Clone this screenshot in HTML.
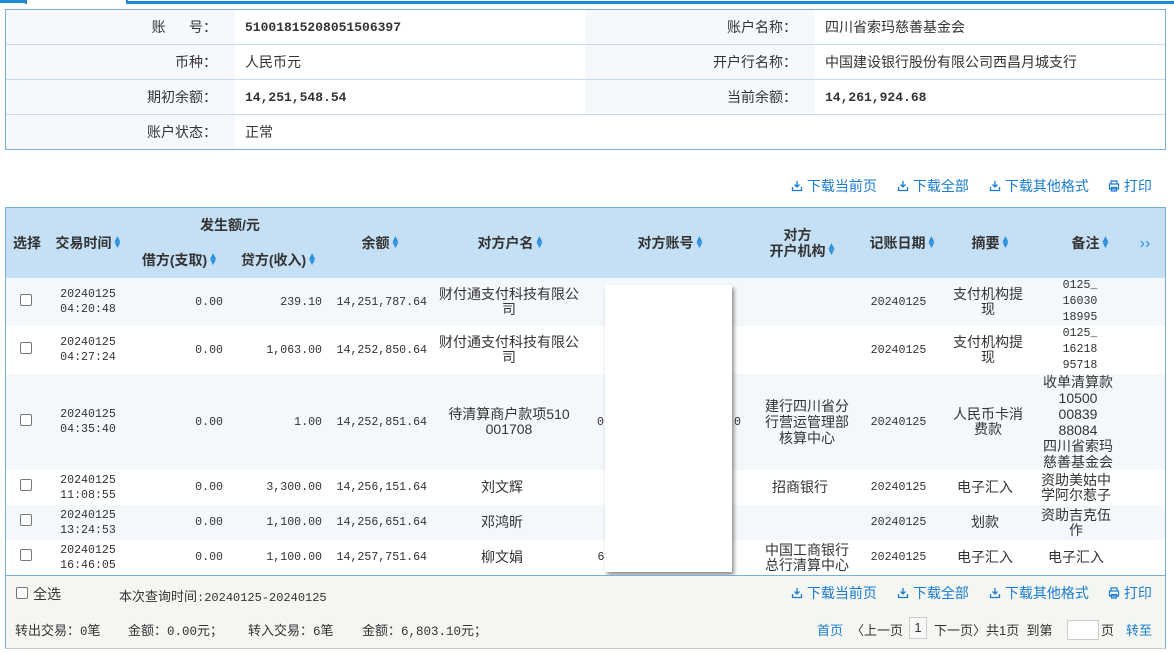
<!DOCTYPE html>
<html><head><meta charset="utf-8">
<style>
*{margin:0;padding:0;box-sizing:border-box}
body{width:1174px;height:653px;background:#fff;position:relative;overflow:hidden;font-family:"Liberation Sans","Noto Sans CJK SC",sans-serif;font-size:14px;color:#333}
.a{position:absolute}
.c{position:absolute;display:flex;align-items:center;justify-content:center;text-align:center;line-height:15px}
.r{justify-content:flex-end;text-align:right}
.m{font-family:"Liberation Mono","Noto Sans CJK SC",monospace;font-size:11.6px}
.lbl{position:absolute;background:#f5f9fd;display:flex;align-items:center;justify-content:flex-end;padding-right:18px}
.val{position:absolute;display:flex;align-items:center;padding-left:10px}
.hd{font-weight:bold;color:#333;font-size:14px}
.ar{color:#2a8fdc;font-size:10px;display:inline-block;width:8px;line-height:6px;vertical-align:middle;margin-left:1px}
.lnk{position:absolute;color:#1a7bd0;font-size:14px;display:flex;align-items:center}
.cb{position:absolute;width:12px;height:12px;border:1px solid #777;border-radius:2px;background:#fff}
.ft{position:absolute;top:620px;font-size:13px}
.ft .m{font-size:12.5px}
</style></head><body>
<div class="a" style="left:0;top:0;width:26px;height:3px;background:#1e8ad6"></div>
<div class="a" style="left:25px;top:0;width:2px;height:4px;background:#1e8ad6"></div>
<div class="a" style="left:126px;top:0;width:2px;height:4px;background:#1e8ad6"></div>
<div class="a" style="left:127px;top:1px;width:1047px;height:3px;background:#1e8ad6"></div>

<div class="a" style="left:5px;top:9px;width:1161px;height:141px;border:1px solid #7aaedc"></div>
<div class="lbl" style="left:6px;top:10px;width:229px;height:34px">账&nbsp;&nbsp;&nbsp;&nbsp;&nbsp;&nbsp;号：</div>
<div class="val m" style="left:235px;top:10px;height:34px;font-weight:bold;font-size:13px">51001815208051506397</div>
<div class="lbl" style="left:585px;top:10px;width:230px;height:34px">账户名称：</div>
<div class="val" style="left:815px;top:10px;height:34px">四川省索玛慈善基金会</div>
<div class="a" style="left:6px;top:44px;width:1159px;height:1px;background:#c8daed"></div>
<div class="lbl" style="left:6px;top:45px;width:229px;height:34px">币种：</div>
<div class="val" style="left:235px;top:45px;height:34px">人民币元</div>
<div class="lbl" style="left:585px;top:45px;width:230px;height:34px">开户行名称：</div>
<div class="val" style="left:815px;top:45px;height:34px">中国建设银行股份有限公司西昌月城支行</div>
<div class="a" style="left:6px;top:79px;width:1159px;height:1px;background:#c8daed"></div>
<div class="lbl" style="left:6px;top:80px;width:229px;height:34px">期初余额：</div>
<div class="val m" style="left:235px;top:80px;height:34px;font-weight:bold;font-size:13px">14,251,548.54</div>
<div class="lbl" style="left:585px;top:80px;width:230px;height:34px">当前余额：</div>
<div class="val m" style="left:815px;top:80px;height:34px;font-weight:bold;font-size:13px">14,261,924.68</div>
<div class="a" style="left:6px;top:114px;width:1159px;height:1px;background:#c8daed"></div>
<div class="lbl" style="left:6px;top:115px;width:229px;height:34px">账户状态：</div>
<div class="val" style="left:235px;top:115px;height:34px">正常</div>

<svg width="0" height="0" style="position:absolute"><defs>
<symbol id="dl" viewBox="0 0 12 12"><path d="M6 1v6M3.5 4.5L6 7l2.5-2.5M1.5 7v3.5h9V7" fill="none" stroke="#1a7bd0" stroke-width="1.3"/></symbol>
<symbol id="pr" viewBox="0 0 12 12"><path d="M3 4V1h6v3M1.5 4h9v5h-9zM3.5 7.5h5v3.5h-5z" fill="#fff" stroke="#1a7bd0" stroke-width="1.2"/></symbol>
</defs></svg>
<div class="lnk" style="left:791px;top:177px;height:18px"><svg width="12" height="12"><use href="#dl"/></svg>&nbsp;下载当前页</div>
<div class="lnk" style="left:897px;top:177px;height:18px"><svg width="12" height="12"><use href="#dl"/></svg>&nbsp;下载全部</div>
<div class="lnk" style="left:989px;top:177px;height:18px"><svg width="12" height="12"><use href="#dl"/></svg>&nbsp;下载其他格式</div>
<div class="lnk" style="left:1108px;top:177px;height:18px"><svg width="12" height="12"><use href="#pr"/></svg>&nbsp;打印</div>

<div class="a" style="left:5px;top:207px;width:1161px;height:442px;border:1px solid #7aaedc;border-bottom-color:#ccc"></div>
<div class="a" style="left:6px;top:208px;width:1159px;height:70px;background:#c5dff5"></div>
<div class="c hd" style="left:6px;top:208px;width:42px;height:70px">选择</div>
<div class="c hd" style="left:48px;top:208px;width:80px;height:70px">交易时间<span class="ar">▲<br>▼</span></div>
<div class="c hd" style="left:130px;top:212px;width:200px;height:26px">发生额/元</div>
<div class="c hd" style="left:130px;top:248px;width:98px;height:24px">借方(支取)<span class="ar">▲<br>▼</span></div>
<div class="c hd" style="left:230px;top:248px;width:96px;height:24px">贷方(收入)<span class="ar">▲<br>▼</span></div>
<div class="c hd" style="left:340px;top:208px;width:80px;height:70px">余额<span class="ar">▲<br>▼</span></div>
<div class="c hd" style="left:440px;top:208px;width:140px;height:70px">对方户名<span class="ar">▲<br>▼</span></div>
<div class="c hd" style="left:610px;top:208px;width:120px;height:70px">对方账号<span class="ar">▲<br>▼</span></div>
<div class="c hd" style="left:752px;top:208px;width:100px;height:70px;line-height:16px">对方<br>开户机构<span class="ar" style="margin-top:14px">▲<br>▼</span></div>
<div class="c hd" style="left:852px;top:208px;width:100px;height:70px">记账日期<span class="ar">▲<br>▼</span></div>
<div class="c hd" style="left:945px;top:208px;width:90px;height:70px">摘要<span class="ar">▲<br>▼</span></div>
<div class="c hd" style="left:1040px;top:208px;width:100px;height:70px">备注<span class="ar">▲<br>▼</span></div>
<div class="c" style="left:1130px;top:208px;width:30px;height:70px;color:#2a8fdc;font-size:16px">››</div>

<div class="a" style="left:6px;top:278px;width:1159px;height:48px;background:#f4f8fc"></div>
<div class="a" style="left:6px;top:374px;width:1159px;height:96px;background:#f4f8fc"></div>
<div class="a" style="left:6px;top:505px;width:1159px;height:35px;background:#f4f8fc"></div>

<div class="cb" style="left:20px;top:294px"></div>
<div class="c m" style="left:48px;top:278px;width:80px;height:48px">20240125<br>04:20:48</div>
<div class="c r m" style="left:130px;top:278px;width:93px;height:48px">0.00</div>
<div class="c r m" style="left:230px;top:278px;width:92px;height:48px">239.10</div>
<div class="c r m" style="left:326px;top:278px;width:101px;height:48px">14,251,787.64</div>
<div class="c" style="left:437px;top:278px;width:144px;height:48px">财付通支付科技有限公司</div>
<div class="c m" style="left:852px;top:278px;width:93px;height:48px">20240125</div>
<div class="c" style="left:952px;top:278px;width:72px;height:48px">支付机构提现</div>
<div class="c m" style="left:1050px;top:278px;width:60px;height:48px;line-height:16px">0125_<br>16030<br>18995</div>

<div class="cb" style="left:20px;top:342px"></div>
<div class="c m" style="left:48px;top:326px;width:80px;height:48px">20240125<br>04:27:24</div>
<div class="c r m" style="left:130px;top:326px;width:93px;height:48px">0.00</div>
<div class="c r m" style="left:230px;top:326px;width:92px;height:48px">1,063.00</div>
<div class="c r m" style="left:326px;top:326px;width:101px;height:48px">14,252,850.64</div>
<div class="c" style="left:437px;top:326px;width:144px;height:48px">财付通支付科技有限公司</div>
<div class="c m" style="left:852px;top:326px;width:93px;height:48px">20240125</div>
<div class="c" style="left:952px;top:326px;width:72px;height:48px">支付机构提现</div>
<div class="c m" style="left:1050px;top:326px;width:60px;height:48px;line-height:16px">0125_<br>16218<br>95718</div>

<div class="cb" style="left:20px;top:414px"></div>
<div class="c m" style="left:48px;top:374px;width:80px;height:96px">20240125<br>04:35:40</div>
<div class="c r m" style="left:130px;top:374px;width:93px;height:96px">0.00</div>
<div class="c r m" style="left:230px;top:374px;width:92px;height:96px">1.00</div>
<div class="c r m" style="left:326px;top:374px;width:101px;height:96px">14,252,851.64</div>
<div class="c" style="left:440px;top:374px;width:138px;height:96px">待清算商户款项510<br>001708</div>
<div class="c m" style="left:597px;top:374px;width:144px;height:96px;justify-content:space-between">0<span>0</span></div>
<div class="c" style="left:762px;top:374px;width:90px;height:96px;line-height:16px">建行四川省分行营运管理部核算中心</div>
<div class="c m" style="left:852px;top:374px;width:93px;height:96px">20240125</div>
<div class="c" style="left:952px;top:374px;width:72px;height:96px">人民币卡消费款</div>
<div class="c" style="left:1035px;top:374px;width:86px;height:96px;line-height:16px">收单清算款<br>10500<br>00839<br>88084<br>四川省索玛<br>慈善基金会</div>

<div class="cb" style="left:20px;top:479px"></div>
<div class="c m" style="left:48px;top:470px;width:80px;height:35px">20240125<br>11:08:55</div>
<div class="c r m" style="left:130px;top:470px;width:93px;height:35px">0.00</div>
<div class="c r m" style="left:230px;top:470px;width:92px;height:35px">3,300.00</div>
<div class="c r m" style="left:326px;top:470px;width:101px;height:35px">14,256,151.64</div>
<div class="c" style="left:437px;top:470px;width:130px;height:35px">刘文辉</div>
<div class="c" style="left:760px;top:470px;width:80px;height:35px">招商银行</div>
<div class="c m" style="left:852px;top:470px;width:93px;height:35px">20240125</div>
<div class="c" style="left:945px;top:470px;width:80px;height:35px">电子汇入</div>
<div class="c" style="left:1039px;top:470px;width:74px;height:35px">资助美姑中学阿尔惹子</div>

<div class="cb" style="left:20px;top:514px"></div>
<div class="c m" style="left:48px;top:505px;width:80px;height:35px">20240125<br>13:24:53</div>
<div class="c r m" style="left:130px;top:505px;width:93px;height:35px">0.00</div>
<div class="c r m" style="left:230px;top:505px;width:92px;height:35px">1,100.00</div>
<div class="c r m" style="left:326px;top:505px;width:101px;height:35px">14,256,651.64</div>
<div class="c" style="left:437px;top:505px;width:130px;height:35px">邓鸿昕</div>
<div class="c m" style="left:852px;top:505px;width:93px;height:35px">20240125</div>
<div class="c" style="left:945px;top:505px;width:80px;height:35px">划款</div>
<div class="c" style="left:1039px;top:505px;width:74px;height:35px">资助吉克伍作</div>

<div class="cb" style="left:20px;top:549px"></div>
<div class="c m" style="left:48px;top:540px;width:80px;height:35px">20240125<br>16:46:05</div>
<div class="c r m" style="left:130px;top:540px;width:93px;height:35px">0.00</div>
<div class="c r m" style="left:230px;top:540px;width:92px;height:35px">1,100.00</div>
<div class="c r m" style="left:326px;top:540px;width:101px;height:35px">14,257,751.64</div>
<div class="c" style="left:437px;top:540px;width:130px;height:35px">柳文娟</div>
<div class="c m" style="left:595px;top:540px;width:12px;height:35px">6</div>
<div class="c" style="left:755px;top:540px;width:104px;height:35px">中国工商银行<br>总行清算中心</div>
<div class="c m" style="left:852px;top:540px;width:93px;height:35px">20240125</div>
<div class="c" style="left:945px;top:540px;width:80px;height:35px">电子汇入</div>
<div class="c" style="left:1039px;top:540px;width:74px;height:35px">电子汇入</div>

<div class="a" style="left:605px;top:285px;width:127px;height:287px;background:#fff;box-shadow:2px 3px 4px rgba(0,0,0,.45)"></div>

<div class="a" style="left:6px;top:575px;width:1159px;height:73px;background:#f4f6f2;border-top:1px solid #7aaedc"></div>
<div class="cb" style="left:16px;top:587px"></div>
<div class="a" style="left:33px;top:584px">全选</div>
<div class="a m" style="left:119px;top:586px;font-size:12px"><span style="font-family:'Noto Sans CJK SC';font-size:13px">本次查询时间</span>:20240125-20240125</div>
<div class="lnk" style="left:791px;top:584px;height:18px"><svg width="12" height="12"><use href="#dl"/></svg>&nbsp;下载当前页</div>
<div class="lnk" style="left:897px;top:584px;height:18px"><svg width="12" height="12"><use href="#dl"/></svg>&nbsp;下载全部</div>
<div class="lnk" style="left:989px;top:584px;height:18px"><svg width="12" height="12"><use href="#dl"/></svg>&nbsp;下载其他格式</div>
<div class="lnk" style="left:1108px;top:584px;height:18px"><svg width="12" height="12"><use href="#pr"/></svg>&nbsp;打印</div>
<div class="ft" style="left:15px">转出交易：<span class="m">0</span>笔</div>
<div class="ft" style="left:128px">金额：<span class="m">0.00</span>元；</div>
<div class="ft" style="left:248px">转入交易：<span class="m">6</span>笔</div>
<div class="ft" style="left:362px">金额：<span class="m">6,803.10</span>元；</div>
<div class="a" style="left:817px;top:620px;color:#1a7bd0;font-size:13px">首页</div>
<div class="a" style="left:851px;top:620px;font-size:13px">〈上一页</div>
<div class="a" style="left:909px;top:617px;width:18px;height:22px;border:1px solid #ccc;background:#f7f7f7;text-align:center;line-height:20px;font-size:13px">1</div>
<div class="a" style="left:934px;top:620px;font-size:13px">下一页〉共1页&nbsp;&nbsp;到第</div>
<div class="a" style="left:1067px;top:620px;width:32px;height:20px;border:1px solid #ccc;background:#fff"></div>
<div class="a" style="left:1101px;top:620px;font-size:13px">页</div>
<div class="a" style="left:1126px;top:620px;color:#1a7bd0;font-size:13px">转至</div>
</body></html>
